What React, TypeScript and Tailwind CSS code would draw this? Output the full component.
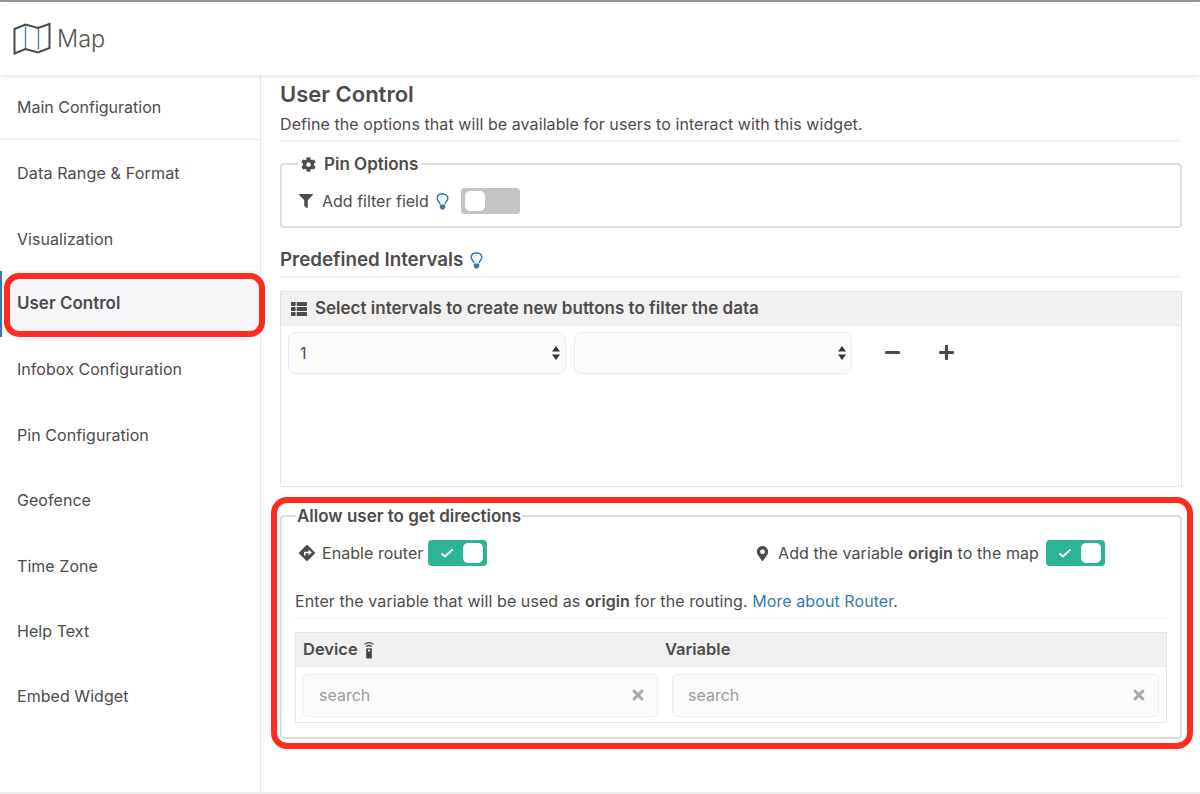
import React from "react";
import { FaCog, FaFilter, FaThList, FaMinus, FaPlus, FaDirections, FaMapMarkerAlt, FaTimes } from "react-icons/fa";

const items = ["Main Configuration", "Data Range & Format", "Visualization", "User Control", "Infobox Configuration", "Pin Configuration", "Geofence", "Time Zone", "Help Text", "Embed Widget"];

function Toggle({ on }: { on?: boolean }) {
  return (
    <span className={`flex h-[26px] w-[59px] items-center rounded-[4px] px-1 ${on ? "justify-end bg-[#2bb594]" : "justify-start bg-[#c4c4c4]"}`}>
      {on && (
        <svg width="14" height="12" viewBox="0 0 14 12" className="mr-[9px]">
          <path d="M1.5 6.5 L5 9.5 L12.5 2.5" fill="none" stroke="#fff" strokeWidth="2" />
        </svg>
      )}
      <span className="h-[20px] w-[20px] rounded-[5px] bg-white" />
    </span>
  );
}

function Bulb() {
  return (
    <svg width="13" height="17" viewBox="0 0 13 17">
      <path d="M3.8 11 C3.6 8.6 1.2 7.8 1.2 5.2 C1.2 2.6 3.4 1 6.5 1 C9.6 1 11.8 2.6 11.8 5.2 C11.8 7.8 9.4 8.6 9.2 11" fill="none" stroke="#337ab7" strokeWidth="1.5" />
      <path d="M3.8 11.5 H9.2 V14.5 L7.8 16.4 H5.2 L3.8 14.5 Z" fill="#337ab7" />
      <path d="M6.5 3.4 C5 3.4 4 4.2 3.8 5.4" fill="none" stroke="#9cc2e0" strokeWidth="1" />
    </svg>
  );
}

function SelectBox({ value, w }: { value?: string; w: string }) {
  return (
    <div className={`flex h-[42px] items-center justify-between rounded-[7px] border border-[#ececec] bg-[#fbfbfb] pl-[11px] pr-[3px] text-[16px] ${w}`}>
      <span>{value}</span>
      <svg width="10" height="16" viewBox="0 0 10 16" className="mr-[1px]">
        <path d="M5 1 L9 6.5 H1 Z M5 15 L9 9.5 H1 Z" fill="#333" />
      </svg>
    </div>
  );
}

function SearchBox({ w }: { w: string }) {
  return (
    <div className={`flex h-[43px] items-center justify-between rounded-[4px] border border-[#eeeeee] bg-[#fbfbfb] pb-[1px] pl-[15px] pr-[11px] text-[16px] text-[#a09999] ${w}`}>
      <span>search</span>
      <FaTimes className="text-[16px] text-[#a8a8a8]" />
    </div>
  );
}

export default function App() {
  return (
    <div className="relative flex h-[794px] w-[1200px] flex-col overflow-hidden bg-white font-['Inter','Liberation_Sans',sans-serif] text-[16px] text-[#4e4b4b]">
      <div className="h-[2px] bg-[#9a9a9a]" />
      <header className="z-10 flex h-[73px] items-center pl-[13px] shadow-[0_1px_5px_rgba(0,0,0,0.14)]">
        <svg width="38" height="33" viewBox="0 0 38 33">
          <path d="M12.5 4.5 V27.5 M25.5 4.5 V27.5" stroke="#3f87bd" strokeWidth="1.4" fill="none" />
          <path d="M1.5 7 L12.5 2.5 L25 6 L36.5 2 V26 L25 30.5 L12.5 27 L1.5 31.5 Z" fill="none" stroke="#4a4a4a" strokeWidth="2" strokeLinejoin="miter" />
        </svg>
        <span className="ml-[6px] mt-[1px] text-[23.5px] font-light text-[#555]">Map</span>
      </header>

      <div className="flex min-h-0 flex-1 border-b-2 border-[#eeeeee]">
        <nav className="w-[261px] shrink-0 border-r border-[#e9e9e9]">
          {items.map((t, i) => (
            <div
              key={t}
              className={`flex items-center pl-[17px] ${i === 0 ? "h-[65px] border-b border-[#e6e9ee] pb-[1px]" : i === 1 ? "h-[66px] text-[16.2px] tracking-[0.08px]" : "h-[65.4px] tracking-[0.05px]"} ${i === 3 ? "border-l-2 border-[#337ab7] bg-[#f7f7fa] !pl-[15px] text-[17px] font-semibold !tracking-normal" : ""}`}
            >
              {t}
            </div>
          ))}
        </nav>

        <main className="min-w-0 flex-1 pl-[19px] pr-[18px] pt-[5px]">
          <h2 className="text-[22px] font-semibold leading-[28px]">User Control</h2>
          <p className="mt-[5px] border-b border-[#e6e9ee] pb-[5px] text-[16px] leading-[22px] tracking-[0.08px]">
            Define the options that will be available for users to interact with this widget.
          </p>

          <fieldset className="mt-[14px] h-[73px] rounded-[4px] border-2 border-[#dddddd] pl-[17px]">
            <legend className="ml-[-1px] flex items-center gap-[8px] px-[3px] text-[17px] font-semibold leading-[18px]">
              <FaCog className="text-[15px]" /> Pin Options
            </legend>
            <div className="mt-[15px] flex items-center">
              <FaFilter className="text-[14px]" />
              <span className="ml-[9px]">Add filter field</span>
              <span className="ml-[7px] flex"><Bulb /></span>
              <span className="ml-[12px]"><Toggle /></span>
            </div>
          </fieldset>

          <h3 className="mt-[20px] flex items-center gap-[7px] border-b border-[#e6e9ee] pb-[4px] text-[18.8px] font-semibold leading-[24px]">
            Predefined Intervals <Bulb />
          </h3>

          <section className="mt-[14px] h-[196px] border border-[#dfe3ea]">
            <div className="flex h-[34px] items-center gap-[8px] border-b border-[#e6e9f2] bg-[#f1f1f1] pl-[10px] text-[17px] font-semibold">
              <FaThList className="text-[16px]" /> Select intervals to create new buttons to filter the data
            </div>
            <div className="mt-[6px] flex items-center pl-[7px]">
              <SelectBox value="1" w="w-[278px]" />
              <div className="w-[8px]" />
              <SelectBox w="w-[278px]" />
              <FaMinus className="mb-[2px] ml-[32px] text-[17px]" />
              <FaPlus className="mb-[2px] ml-[37px] text-[17px]" />
            </div>
          </section>

          <fieldset className="mt-[20px] h-[232px] rounded-[4px] border-2 border-[#dddddd] px-[13px]">
            <legend className="ml-[1px] px-[1px] text-[17px] font-semibold leading-[18px]">Allow user to get directions</legend>
            <div className="mt-[15px] flex h-[26px] items-center">
              <div className="flex w-[460px] items-center pl-[4px]">
                <FaDirections className="text-[16px]" />
                <span className="ml-[7px] tracking-[0.05px]">Enable router</span>
                <span className="ml-[5px]"><Toggle on /></span>
              </div>
              <div className="flex items-center">
                <FaMapMarkerAlt className="text-[15px]" />
                <span className="ml-[8px] tracking-[0.1px]">Add the variable <b className="font-semibold">origin</b> to the map</span>
                <span className="ml-[7px]"><Toggle on /></span>
              </div>
            </div>
            <p className="mt-[24px] border-b border-[#eeeeee] pb-[6px] text-[16px] leading-[22px] tracking-[0.08px]">
              Enter the variable that will be used as <b className="font-semibold">origin</b> for the routing. <span className="text-[#337ab7]">More about Router</span>.
            </p>
            <section className="mt-[13px] h-[91px] border border-[#e2e7ee]">
              <div className="flex h-[34px] items-center border-b border-[#e2e7ee] bg-[#f1f1f1] pl-[7px] text-[16.5px] font-semibold">
                <span className="flex w-[362px] items-center gap-[5px]">
                  Device
                  <svg width="12" height="18" viewBox="0 0 10 16">
                    <path d="M1 3 Q5 0 9 3 M2.5 5 Q5 3 7.5 5" fill="none" stroke="#444" strokeWidth="1.1" />
                    <path d="M2.5 6.5 H7.5 V15.5 H2.5 Z" fill="#444" />
                    <circle cx="5" cy="8.5" r="1" fill="#fff" />
                  </svg>
                </span>
                <span>Variable</span>
              </div>
              <div className="mt-[7px] flex gap-[14px] pl-[7px]">
                <SearchBox w="w-[355px]" />
                <SearchBox w="w-[487px]" />
              </div>
            </section>
          </fieldset>
        </main>
      </div>

      <div className="pointer-events-none absolute left-[4px] top-[273px] h-[64px] w-[261px] rounded-[15px] border-[6px] border-[#fe2b1f]" />
      <div className="pointer-events-none absolute left-[271px] top-[497px] h-[252px] w-[922px] rounded-[16px] border-[6px] border-[#fe2b1f]" />
    </div>
  );
}
